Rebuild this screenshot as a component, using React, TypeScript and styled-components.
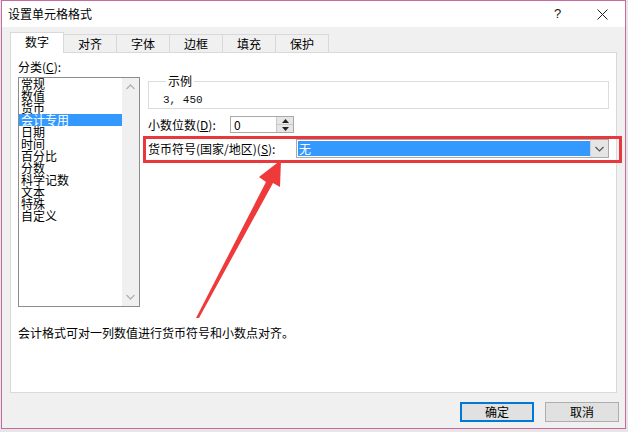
import styled, { createGlobalStyle } from "styled-components";

const GlobalStyle = createGlobalStyle`
  html, body { margin: 0; padding: 0; }
  body {
    background: #e6e6e6;
    font-family: "Noto Sans CJK SC", "Liberation Sans", sans-serif;
    font-size: 12px;
    color: #000;
  }
`;

const Page = styled.div`
  position: relative;
  width: 628px;
  height: 432px;
  overflow: hidden;
`;

const Dialog = styled.div`
  box-sizing: border-box;
  margin-left: 1px;
  width: 625px;
  height: 429px;
  border: 1px solid #c9699f;
  background: #f0f0f0;
  display: flex;
  flex-direction: column;
`;

const TitleBar = styled.div`
  height: 26px;
  background: #fff;
  display: flex;
  align-items: center;
  padding-left: 6px;
  font-size: 12px;
  line-height: 16px;
`;

const Title = styled.div`
  flex: 1;
`;

const TitleButton = styled.div`
  width: 45px;
  height: 26px;
  display: flex;
  align-items: center;
  justify-content: center;
  font-family: "Liberation Sans", sans-serif;
  font-size: 13px;
  color: #111;
`;

const TabStrip = styled.div`
  display: flex;
  align-items: flex-end;
  height: 20px;
  margin-top: 5px;
  padding-left: 8px;
`;

const Tab = styled.div<{ $active?: boolean }>`
  box-sizing: border-box;
  width: 54px;
  height: ${(p) => (p.$active ? "21px" : "18px")};
  margin-left: -1px;
  margin-bottom: ${(p) => (p.$active ? "-1px" : "0")};
  position: relative;
  z-index: ${(p) => (p.$active ? 2 : 1)};
  background: ${(p) => (p.$active ? "#fff" : "#f0f0f0")};
  border: 1px solid #d9d9d9;
  border-bottom: none;
  display: flex;
  align-items: center;
  justify-content: center;
  padding-bottom: ${(p) => (p.$active ? "2px" : "0")};
  line-height: 16px;
  &:first-child { margin-left: 0; }
`;

const Panel = styled.div`
  box-sizing: border-box;
  margin: 0 8px;
  height: 341px;
  background: #fff;
  border: 1px solid #d9d9d9;
  padding: 6px 7px 0 7px;
  display: flex;
  flex-direction: column;
`;

const Columns = styled.div`
  display: grid;
  grid-template-columns: 122px 1fr;
  column-gap: 8px;
  align-items: start;
`;

const LeftCol = styled.div`
  display: flex;
  flex-direction: column;
`;

const Label = styled.div`
  line-height: 16px;
  white-space: nowrap;
`;

const Key = styled.span`
  text-decoration: underline;
`;

const ListBox = styled.div`
  box-sizing: border-box;
  margin-top: 2px;
  height: 230px;
  border: 1px solid #8c8c8c;
  display: flex;
`;

const ListItems = styled.div`
  flex: 1;
  display: flex;
  flex-direction: column;
`;

const ListItem = styled.div<{ $selected?: boolean }>`
  height: 12px;
  line-height: 12px;
  padding-left: 2px;
  white-space: nowrap;
  background: ${(p) => (p.$selected ? "#3399ff" : "transparent")};
  color: ${(p) => (p.$selected ? "#fff" : "#000")};
`;

const ScrollBar = styled.div`
  width: 17px;
  background: #f0f0f0;
  display: flex;
  flex-direction: column;
  justify-content: space-between;
  align-items: center;
  padding: 6px 0;
`;

const RightCol = styled.div`
  display: flex;
  flex-direction: column;
  padding-top: 14px;
`;

const Group = styled.fieldset`
  margin: 0;
  padding: 3px 0 0 14px;
  border: 1px solid #dcdcdc;
  min-width: 0;
`;

const Legend = styled.legend`
  padding: 0 2px;
  margin-left: 3px;
  line-height: 16px;
`;

const Sample = styled.div`
  font-family: "Liberation Mono", monospace;
  font-size: 11px;
  line-height: 16px;
  color: #111;
`;

const Row = styled.div<{ $gap: number }>`
  display: flex;
  align-items: center;
  margin-top: ${(p) => p.$gap}px;
`;

const RowLabel = styled(Label)<{ $w: number }>`
  width: ${(p) => p.$w}px;
`;

const SpinBox = styled.div`
  box-sizing: border-box;
  width: 64px;
  height: 17px;
  border: 1px solid #a9a9a9;
  display: flex;
`;

const SpinInput = styled.div`
  flex: 1;
  padding-left: 3px;
  line-height: 15px;
`;

const SpinButtons = styled.div`
  width: 16px;
  display: flex;
  flex-direction: column;
  border-left: 1px solid #c8c8c8;
`;

const SpinButton = styled.div`
  flex: 1;
  background: #e6e6e6;
  display: flex;
  align-items: center;
  justify-content: center;
  & + & { border-top: 1px solid #c8c8c8; }
`;

const Combo = styled.div`
  box-sizing: border-box;
  flex: 1;
  height: 19px;
  border: 1px solid #a9a9a9;
  display: flex;
  padding: 1px 0 1px 1px;
`;

const ComboValue = styled.div`
  flex: 1;
  background: #3399ff;
  color: #fff;
  line-height: 15px;
  padding-left: 1px;
`;

const ComboButton = styled.div`
  width: 17px;
  margin-top: -1px;
  margin-bottom: -1px;
  background: #e5e5e5;
  border-left: 1px solid #d0d0d0;
  display: flex;
  align-items: center;
  justify-content: center;
`;

const Description = styled.div`
  margin-top: 18px;
  line-height: 16px;
`;

const Footer = styled.div`
  display: flex;
  justify-content: flex-end;
  gap: 11px;
  margin-top: 9px;
  padding-right: 6px;
`;

const Button = styled.div<{ $default?: boolean }>`
  box-sizing: border-box;
  width: 74px;
  height: 20px;
  background: #e1e1e1;
  border: ${(p) => (p.$default ? "2px solid #0078d7" : "1px solid #adadad")};
  display: flex;
  align-items: center;
  justify-content: center;
  line-height: 16px;
`;

const Highlight = styled.div`
  position: absolute;
  left: 143px;
  top: 136px;
  width: 479px;
  height: 27px;
  box-sizing: border-box;
  border: 3px solid #e8383d;
  pointer-events: none;
`;

const Overlay = styled.svg`
  position: absolute;
  left: 0;
  top: 0;
  pointer-events: none;
`;

const categories = [
  "常规",
  "数值",
  "货币",
  "会计专用",
  "日期",
  "时间",
  "百分比",
  "分数",
  "科学记数",
  "文本",
  "特殊",
  "自定义",
];

const tabs = ["数字", "对齐", "字体", "边框", "填充", "保护"];

export default function App() {
  return (
    <Page>
      <GlobalStyle />
      <Dialog>
        <TitleBar>
          <Title>设置单元格格式</Title>
          <TitleButton>?</TitleButton>
          <TitleButton>
            <svg width="11" height="11" viewBox="0 0 11 11">
              <path d="M0.5 0.5 L10.5 10.5 M10.5 0.5 L0.5 10.5" stroke="#222" strokeWidth="1" />
            </svg>
          </TitleButton>
        </TitleBar>

        <TabStrip>
          {tabs.map((t, i) => (
            <Tab key={t} $active={i === 0}>
              {t}
            </Tab>
          ))}
        </TabStrip>

        <Panel>
          <Columns>
            <LeftCol>
              <Label>
                分类(<Key>C</Key>):
              </Label>
              <ListBox>
                <ListItems>
                  {categories.map((c) => (
                    <ListItem key={c} $selected={c === "会计专用"}>
                      {c}
                    </ListItem>
                  ))}
                </ListItems>
                <ScrollBar>
                  <svg width="9" height="6" viewBox="0 0 9 6">
                    <polyline points="0.5,5 4.5,1 8.5,5" fill="none" stroke="#b5b5b5" strokeWidth="1.5" />
                  </svg>
                  <svg width="9" height="6" viewBox="0 0 9 6">
                    <polyline points="0.5,1 4.5,5 8.5,1" fill="none" stroke="#b5b5b5" strokeWidth="1.5" />
                  </svg>
                </ScrollBar>
              </ListBox>
            </LeftCol>

            <RightCol>
              <Group>
                <Legend>示例</Legend>
                <Sample>3, 450</Sample>
              </Group>

              <Row $gap={7}>
                <RowLabel $w={82}>
                  小数位数(<Key>D</Key>):
                </RowLabel>
                <SpinBox>
                  <SpinInput>0</SpinInput>
                  <SpinButtons>
                    <SpinButton>
                      <svg width="7" height="4" viewBox="0 0 7 4">
                        <polygon points="0,4 3.5,0 7,4" fill="#222" />
                      </svg>
                    </SpinButton>
                    <SpinButton>
                      <svg width="7" height="4" viewBox="0 0 7 4">
                        <polygon points="0,0 3.5,4 7,0" fill="#222" />
                      </svg>
                    </SpinButton>
                  </SpinButtons>
                </SpinBox>
              </Row>

              <Row $gap={6}>
                <RowLabel $w={148}>
                  货币符号(国家/地区)(<Key>S</Key>):
                </RowLabel>
                <Combo>
                  <ComboValue>无</ComboValue>
                  <ComboButton>
                    <svg width="9" height="6" viewBox="0 0 9 6">
                      <polyline points="0.5,1 4.5,5 8.5,1" fill="none" stroke="#555" strokeWidth="1.2" />
                    </svg>
                  </ComboButton>
                </Combo>
              </Row>
            </RightCol>
          </Columns>

          <Description>会计格式可对一列数值进行货币符号和小数点对齐。</Description>
        </Panel>

        <Footer>
          <Button $default>确定</Button>
          <Button>取消</Button>
        </Footer>
      </Dialog>

      <Highlight />
      <Overlay width="628" height="432" viewBox="0 0 628 432">
        <polygon
          points="196,318 266,182 259,177 281,160 280,187 273,183 199,318"
          fill="#ee3a3a"
        />
      </Overlay>
    </Page>
  );
}
